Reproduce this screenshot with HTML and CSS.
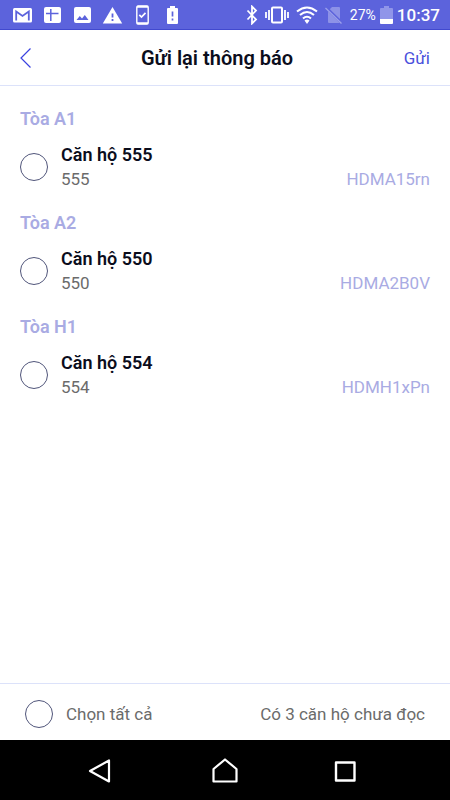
FILE: index.html
```html
<!DOCTYPE html>
<html lang="vi">
<head>
<meta charset="utf-8">
<meta name="viewport" content="width=device-width, initial-scale=1">
<title>Gửi lại thông báo</title>
<link rel="stylesheet" href="styles.css">
</head>
<body>
<div class="status">
  <div class="status-left">
    <svg width="21" height="18" viewBox="0 0 21 18"><rect x="1" y="2" width="19" height="14.500" rx="1.500" fill="#fff"/><path d="M4.200 14.500V5.500L10.500 10l6.300-4.500v9" fill="none" stroke="#5c63dc" stroke-width="1.800"/></svg>
    <svg width="21" height="18" viewBox="0 0 21 18"><rect x="2" y="1" width="17" height="16" rx="2" fill="#fff"/><path d="M4 7.500h12.500M8.800 3v12" fill="none" stroke="#5c63dc" stroke-width="1.500"/></svg>
    <svg width="21" height="18" viewBox="0 0 21 18"><rect x="2" y="1" width="17" height="16" rx="2" fill="#fff"/><path d="M4.500 14l3.300-4 2.200 2.400L12.800 9l3.700 5z" fill="#5c63dc"/></svg>
    <svg width="21" height="18" viewBox="0 0 21 18"><path d="M10.500 1L20.200 17.500H.800z" fill="#fff"/><path d="M10.500 7.500v4M10.500 13v2" stroke="#5c63dc" stroke-width="1.800"/></svg>
    <svg width="21" height="20" viewBox="0 0 21 20"><rect x="4.800" y="1" width="11.400" height="18" rx="1.500" fill="none" stroke="#fff" stroke-width="1.400"/><path d="M4.800 1.800h11.400M4.800 18.200h11.400" stroke="#fff" stroke-width="2"/><path d="M7.300 9.800l2.200 2.200 4-4.200" fill="none" stroke="#fff" stroke-width="1.700"/></svg>
    <svg width="21" height="18" viewBox="0 0 21 18"><path d="M8 0h5v2h2q1 0 1 1v14q0 1-1 1H6q-1 0-1-1V3q0-1 1-1h2z" fill="#fff"/><path d="M10.500 5.500v5M10.500 12.500v2" stroke="#5c63dc" stroke-width="1.700"/></svg>
  </div>
  <div class="status-right">
    <svg width="12" height="20" viewBox="0 0 12 20"><path d="M1.500 5.500l8.500 9L6 18.500v-17l4 4-8.500 9" fill="none" stroke="#fff" stroke-width="1.800"/></svg>
    <svg width="24" height="18" viewBox="0 0 24 18"><rect x="7" y="1.500" width="10" height="15" rx="1" fill="none" stroke="#fff" stroke-width="2"/><path d="M1 6v6M4 4v10M20 4v10M23 6v6" stroke="#fff" stroke-width="1.800"/></svg>
    <svg width="22" height="18" viewBox="0 0 22 18"><path d="M1 5.500Q11-2.500 21 5.500M4 9Q11 3 18 9M7 12.500Q11 9 15 12.500" fill="none" stroke="#fff" stroke-width="2.100"/><path d="M8.500 14.500Q11 12.700 13.500 14.500L11 18z" fill="#fff"/></svg>
    <svg width="18" height="18" viewBox="0 0 18 18"><path d="M7 1h7q1 0 1 1v14q0 1-1 1H4q-1 0-1-1V5z" fill="#8d92e7"/><path d="M1 1.500l16 15.500" stroke="#5c63dc" stroke-width="3"/><path d="M.500 2l16 15.500" stroke="#9ca0eb" stroke-width="1.300"/></svg>
    <div class="power">
      <span class="percent">27%</span>
      <svg width="13" height="18" viewBox="0 0 13 18"><path d="M4 0h5v2h3q1 0 1 1v10H0V3q0-1 1-1h3z" fill="#9095e9"/><path d="M0 13h13v4q0 1-1 1H1q-1 0-1-1z" fill="#fff"/></svg>
      <time class="clock">10:37</time>
    </div>
  </div>
</div>
<header class="header">
  <button class="back" type="button" aria-label="Quay lại"><svg width="12" height="20" viewBox="0 0 12 20"><path d="M10.500 .500L1 10l9.500 9.500" fill="none" stroke="#3a42e0" stroke-width="1.200"/></svg></button>
  <h1>Gửi lại thông báo</h1>
  <button class="send" type="button">Gửi</button>
</header>
<main class="list">
  <section>
    <h2>Tòa A1</h2>
    <label class="row"><input class="pick" type="checkbox"><span class="info"><strong>Căn hộ 555</strong><span class="detail"><span>555</span><span class="code">HDMA15rn</span></span></span></label>
  </section>
  <section>
    <h2>Tòa A2</h2>
    <label class="row"><input class="pick" type="checkbox"><span class="info"><strong>Căn hộ 550</strong><span class="detail"><span>550</span><span class="code">HDMA2B0V</span></span></span></label>
  </section>
  <section>
    <h2>Tòa H1</h2>
    <label class="row"><input class="pick" type="checkbox"><span class="info"><strong>Căn hộ 554</strong><span class="detail"><span>554</span><span class="code">HDMH1xPn</span></span></span></label>
  </section>
</main>
<footer class="footer">
  <label class="all"><input class="pick" type="checkbox"><span>Chọn tất cả</span></label>
  <span class="count">Có 3 căn hộ chưa đọc</span>
</footer>
<nav class="nav">
  <button type="button" aria-label="Trở về"><svg width="36" height="26" viewBox="0 0 36 26"><path d="M22 3.500v21L3 14z" fill="none" stroke="#fff" stroke-width="2.200" stroke-linejoin="round"/></svg></button>
  <button type="button" aria-label="Màn hình chính"><svg width="26" height="26" viewBox="0 0 26 26"><path d="M1.500 12L13 2.500 24.500 12v12.500h-23z" fill="none" stroke="#fff" stroke-width="2.200" stroke-linejoin="round"/></svg></button>
  <button type="button" aria-label="Ứng dụng gần đây"><svg width="26" height="26" viewBox="0 0 26 26"><rect x="4" y="5.500" width="18.500" height="18" fill="none" stroke="#fff" stroke-width="2.400" stroke-linejoin="round"/></svg></button>
</nav>
</body>
</html>
```
FILE: styles.css
```css
* { box-sizing: border-box; }
body {
  margin: 0;
  min-height: 100vh;
  display: flex;
  flex-direction: column;
  background: #fff;
  color: #6b6b6b;
  font: 17px/24px Roboto, sans-serif;
}
button {
  padding: 0;
  border: 0;
  background: none;
  font: inherit;
}
svg { display: block; flex: none; }
.status {
  display: flex;
  justify-content: space-between;
  height: 30px;
  padding: 0 10px 0 12px;
  border-bottom: 1px solid #4149cf;
  background: #5c63dc;
  color: #fff;
}
.status-left, .status-right, .power { display: flex; align-items: center; }
.status-left { gap: 9px; }
.status-right { gap: 7px; }
.power { gap: 4px; }
.percent { font-size: 14px; }
.clock { font-size: 17px; font-weight: 500; }
.header {
  display: grid;
  grid-template-columns: 1fr auto 1fr;
  align-items: center;
  height: 56px;
  padding: 0 20px;
  border-bottom: 1px solid #dce2fa;
}
.back { justify-self: start; }
.send { justify-self: end; color: #4a50dc; }
h1 {
  margin: 0;
  padding-right: 16px;
  color: #0b0d1c;
  font-size: 20px;
  font-weight: 600;
}
.list { flex: 1; padding: 21px 20px 0; }
section { margin-bottom: 20px; }
h2 {
  margin: 0 0 12px;
  color: #a9abe3;
  font-size: 18px;
  font-weight: 600;
}
.row, .all { display: flex; align-items: center; gap: 13px; }
.pick {
  appearance: none;
  flex: none;
  width: 28px;
  height: 28px;
  margin: 0;
  border: 1px solid #50557a;
  border-radius: 50%;
}
.pick:checked { background: #5c63dc; }
.info { flex: 1; }
.info strong { display: block; color: #0b0d1c; font-size: 18px; font-weight: 600; }
.detail { display: flex; justify-content: space-between; }
.code { color: #a9abe3; }
.footer {
  display: flex;
  align-items: center;
  justify-content: space-between;
  height: 57px;
  padding: 4px 25px 0;
  border-top: 1px solid #dce2fa;
}
.nav {
  display: grid;
  grid-template-columns: repeat(3, 120px);
  justify-content: center;
  justify-items: center;
  align-items: center;
  height: 60px;
  background: #000;
}
```
